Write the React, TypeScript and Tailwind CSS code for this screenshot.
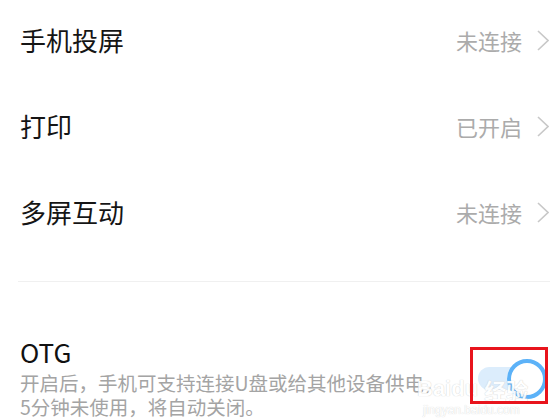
const FONT = '[font-family:"Noto_Sans_CJK_SC","Noto_Sans",sans-serif]';

const ROWS = [
  { title: '手机投屏', value: '未连接' },
  { title: '打印', value: '已开启' },
  { title: '多屏互动', value: '未连接' },
];

function Chevron() {
  return (
    <svg width="12" height="21" viewBox="0 0 12 21" className="ml-[15px] mr-[1px] shrink-0">
      <polyline points="1,1 11,10.5 1,20" fill="none" stroke="#c8c8c8" strokeWidth="1.6" />
    </svg>
  );
}

function Row({ title, value }: { title: string; value: string }) {
  return (
    <div className="flex h-[86px] items-center justify-between pl-[20px]">
      <div className="text-[26px] leading-[32px] text-[#151515]">{title}</div>
      <div className="flex items-center">
        <span className="text-[22px] leading-[30px] text-[#ababab]">{value}</span>
        <Chevron />
      </div>
    </div>
  );
}

export default function App() {
  return (
    <div className={`relative h-[420px] w-[550px] overflow-hidden bg-white ${FONT}`}>
      <div className="-mt-[3px]">
        {ROWS.map(r => (
          <Row key={r.title} title={r.title} value={r.value} />
        ))}
      </div>

      <div className="ml-[18px] mt-[26px] h-px bg-[#f0f0f0]"></div>

      <div className="mt-[54px] flex items-start pl-[20px]">
        <div className="flex-1">
          <div className="text-[26px] leading-[32px] text-[#111]">OTG</div>
          <div className="mt-[3px] whitespace-nowrap text-[19.5px] leading-[24px] text-[#a4a4a4]">
            <div>开启后，手机可支持连接U盘或给其他设备供电，</div>
            <div>5分钟未使用，将自动关闭。</div>
          </div>
        </div>
        <div className="relative mr-[3px] mt-[23px] h-[40px] w-[69px] shrink-0">
          <div className="absolute left-0 top-[8px] h-[23px] w-[52px] rounded-full bg-[#dcedfc]"></div>
          <div className="absolute right-0 top-0 h-[40px] w-[40px] rounded-full border-[4px] border-[#5cb2f8] bg-white"></div>
        </div>
      </div>

      {/* watermark */}
      <div className="pointer-events-none absolute left-[417px] top-[378px] flex items-end gap-[6px] text-[22px] font-bold leading-[22px] text-white opacity-90 [text-shadow:0_0_1px_#bdbdbd]">
        <span className="[font-family:'Liberation_Sans',sans-serif]">Baidu</span>
        <span>经验</span>
      </div>
      <div className="pointer-events-none absolute left-[423px] top-[403px] text-[12px] leading-[14px] text-white [font-family:'Liberation_Sans',sans-serif] [text-shadow:0_0_1px_#c8c8c8]">
        jingyan.baidu.com
      </div>

      {/* annotation box */}
      <div className="pointer-events-none absolute left-[470px] top-[347px] h-[57px] w-[78px] border-[3px] border-[#e8141c]"></div>
    </div>
  );
}
